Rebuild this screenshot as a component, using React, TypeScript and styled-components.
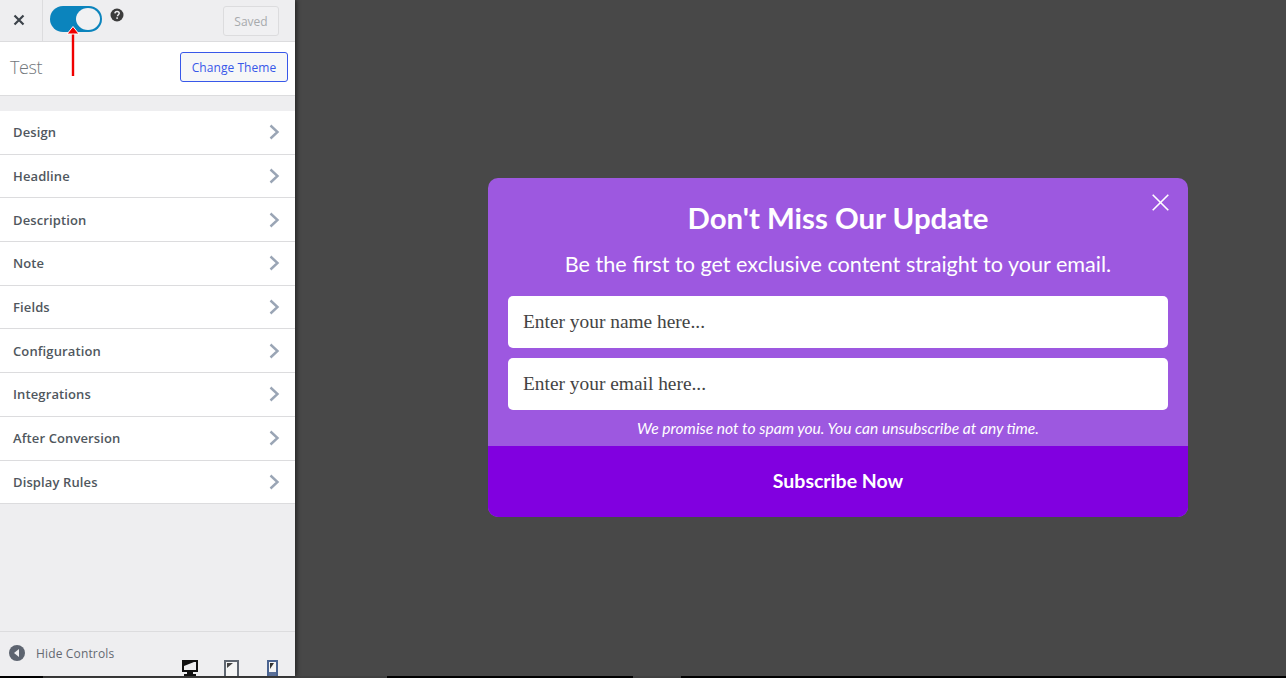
import { createGlobalStyle, styled } from "styled-components";

const GlobalStyle = createGlobalStyle`
  html, body {
    margin: 0;
    padding: 0;
    height: 100%;
    background: #000;
    overflow: hidden;
  }
  * { box-sizing: border-box; }
`;

const sections = [
  "Design",
  "Headline",
  "Description",
  "Note",
  "Fields",
  "Configuration",
  "Integrations",
  "After Conversion",
  "Display Rules",
];

const Shell = styled.div`
  width: 1286px;
  height: 678px;
  display: flex;
  flex-direction: column;
`;

const Main = styled.div`
  height: 676px;
  display: flex;
`;

const Sidebar = styled.aside`
  width: 295px;
  flex: none;
  display: flex;
  flex-direction: column;
  background: #eeeef0;
  box-shadow: 2px 0 4px rgba(0, 0, 0, 0.45);
  position: relative;
  font-family: "Open Sans", sans-serif;
`;

const TopBar = styled.div`
  height: 42px;
  flex: none;
  display: flex;
  border-bottom: 1px solid #dcdcde;
`;

const CloseTab = styled.div`
  width: 43px;
  height: 41px;
  flex: none;
  display: flex;
  align-items: center;
  justify-content: center;
  padding: 0 5px 2px 0;
  border-right: 1px solid #dcdcde;
  color: #3c434a;
`;

const ToggleArea = styled.div`
  position: relative;
  flex: 1;
  display: flex;
  align-items: flex-start;
  padding: 6px 16px 0 7px;
`;

const Toggle = styled.div`
  width: 52px;
  height: 26px;
  border-radius: 13px;
  background: #0b84bd;
  display: flex;
  justify-content: flex-end;
  align-items: center;
  padding-right: 2px;
`;

const Knob = styled.div`
  width: 24px;
  height: 22px;
  border-radius: 50%;
  background: #f1f1f3;
`;

const Help = styled.svg`
  width: 14px;
  height: 14px;
  margin: 2px 0 0 8px;
  flex: none;
`;

const SavedButton = styled.button`
  margin: 0 0 0 auto;
  width: 56px;
  height: 30px;
  padding: 0;
  border: 1px solid #dcdcde;
  border-radius: 3px;
  background: #f0f0f2;
  color: #a7aaad;
  font-family: inherit;
  font-size: 12px;
`;

const Arrow = styled.svg`
  position: absolute;
  left: 22px;
  top: 25px;
  width: 16px;
  height: 52px;
`;

const ThemeRow = styled.div`
  height: 54px;
  flex: none;
  display: flex;
  align-items: flex-start;
  justify-content: space-between;
  padding: 10px 7px 0 10px;
  background: #fff;
  border-bottom: 1px solid #dcdcde;
`;

const ThemeName = styled.span`
  font-size: 18px;
  line-height: 30px;
  font-weight: 300;
  color: #72777c;
  letter-spacing: -0.4px;
`;

const ThemeButton = styled.button`
  width: 108px;
  height: 30px;
  padding: 0;
  border: 1px solid #3858e9;
  border-radius: 3px;
  background: #f6f7f7;
  color: #3858e9;
  font-family: inherit;
  font-size: 12px;
  letter-spacing: 0.05px;
`;

const SectionList = styled.ul`
  list-style: none;
  margin: 15px 0 0;
  padding: 0;
  background: #fff;
`;

const SectionRow = styled.li`
  height: 43.69px;
  display: flex;
  align-items: center;
  justify-content: space-between;
  padding: 0 15px 0 13px;
  border-bottom: 1px solid #dcdcde;
  color: #50575e;
  font-size: 13px;
  font-weight: 600;
  letter-spacing: 0.12px;
`;

const Chevron = styled.svg`
  width: 12px;
  height: 16px;
  flex: none;
`;

const Footer = styled.div`
  margin-top: auto;
  height: 45px;
  flex: none;
  position: relative;
  overflow: hidden;
  display: flex;
  padding: 12px 0 0 9px;
  border-top: 1px solid #dcdcde;
  color: #646970;
  font-size: 12px;
  letter-spacing: 0.15px;
`;

const HideControls = styled.div`
  display: flex;
  align-items: center;
  gap: 11px;
  height: 18px;
`;

const Devices = styled.div`
  position: absolute;
  left: 182px;
  top: 28px;
  display: flex;
  gap: 26px;
`;

const DeviceIcon = styled.svg<{ $shift?: number }>`
  height: 18px;
  flex: none;
  display: block;
  margin-left: ${(p) => p.$shift ?? 0}px;
`;

const Stage = styled.main`
  flex: 1;
  background: #484848;
  display: flex;
  justify-content: flex-end;
  align-items: flex-start;
  padding: 178px 98px 0 0;
`;

const Popup = styled.section`
  position: relative;
  width: 700px;
  height: 339px;
  display: flex;
  flex-direction: column;
  border-radius: 10px;
  overflow: hidden;
  background: #9d58e0;
  color: #fff;
  font-family: Lato, sans-serif;
`;

const PopupBody = styled.div`
  flex: 1;
  display: flex;
  flex-direction: column;
  align-items: center;
  padding: 22px 20px 0;
`;

const Headline = styled.h2`
  margin: 0;
  height: 36px;
  font-size: 29.4px;
  line-height: 36px;
  font-weight: 700;
`;

const Description = styled.p`
  margin: 14px 0 0;
  height: 28px;
  font-size: 21.6px;
  line-height: 28px;
  font-weight: 400;
`;

const PopupClose = styled.svg`
  position: absolute;
  right: 19px;
  top: 16px;
  width: 17px;
  height: 17px;
`;

const Field = styled.div`
  width: 660px;
  height: 52px;
  flex: none;
  margin-top: 10px;
  display: flex;
  align-items: center;
  padding: 0 15px;
  border-radius: 5px;
  background: #fff;
  color: #444;
  font-family: "Liberation Serif", serif;
  font-size: 19.4px;

  &:first-of-type {
    margin-top: 18px;
  }
`;

const Note = styled.p`
  margin: 9px 0 0;
  font-size: 15.6px;
  line-height: 18px;
  font-style: italic;
`;

const Subscribe = styled.button`
  width: 100%;
  height: 71px;
  flex: none;
  border: 0;
  padding: 0 0 2px;
  background: #8100e0;
  color: #fff;
  font-family: Lato, sans-serif;
  font-size: 19.5px;
  font-weight: 700;
`;

const BottomStrip = styled.div`
  height: 2px;
  flex: none;
  display: flex;
  background: #000;
`;

const StripPart = styled.div<{ $w: number; $gray?: boolean }>`
  width: ${(p) => p.$w}px;
  flex: none;
  background: ${(p) => (p.$gray ? "#404040" : "#000")};
`;

const App = () => {
  return (
    <Shell>
      <GlobalStyle />
      <Main>
        <Sidebar>
          <TopBar>
            <CloseTab>
              <svg width="12" height="12" viewBox="0 0 12 12">
                <path d="M1.5 1.5l9 9M10.5 1.5l-9 9" stroke="currentColor" strokeWidth="2.2" />
              </svg>
            </CloseTab>
            <ToggleArea>
              <Toggle>
                <Knob />
              </Toggle>
              <Help viewBox="0 0 14 14">
                <circle cx="7" cy="7" r="6.5" fill="#3c3c3c" />
                <path
                  d="M4.9 5.4c.1-1.3 1-2 2.2-2 1.2 0 2.1.7 2.1 1.8 0 1.6-1.7 1.5-1.7 3"
                  fill="none"
                  stroke="#eeeef0"
                  strokeWidth="1.5"
                />
                <rect x="6.3" y="9.3" width="1.6" height="1.6" fill="#eeeef0" />
              </Help>
              <SavedButton>Saved</SavedButton>
              <Arrow viewBox="0 0 16 52">
                <path d="M8 7v44" stroke="#f00000" strokeWidth="2.4" />
                <path d="M8 1.5l6 7.5H2z" fill="#f00000" stroke="#fff" strokeWidth="1" />
              </Arrow>
            </ToggleArea>
          </TopBar>
          <ThemeRow>
            <ThemeName>Test</ThemeName>
            <ThemeButton>Change Theme</ThemeButton>
          </ThemeRow>
          <SectionList>
            {sections.map((name) => (
              <SectionRow key={name}>
                {name}
                <Chevron viewBox="0 0 12 16">
                  <path d="M2.5 1.5l7 6.5-7 6.5" fill="none" stroke="#9aa5b5" strokeWidth="2.4" />
                </Chevron>
              </SectionRow>
            ))}
          </SectionList>
          <Footer>
            <HideControls>
              <svg width="16" height="16" viewBox="0 0 16 16">
                <circle cx="8" cy="8" r="8" fill="#5d6470" />
                <path d="M10 4v8L5 8z" fill="#eeeef0" />
              </svg>
              Hide Controls
            </HideControls>
            <Devices>
              <DeviceIcon width="16" viewBox="0 0 16 18">
                <path d="M0 0h16v12h-5v2h3v2H2v-2h3v-2H0z" fill="#111" />
                <path d="M2 2h12v8H2z" fill="#eeeef0" />
                <path d="M2 2h10L2 6z" fill="#111" />
              </DeviceIcon>
              <DeviceIcon width="15" viewBox="0 0 15 18">
                <path d="M1 1h13v16H1z" fill="#f5f5f5" stroke="#5f6670" strokeWidth="2" />
                <path d="M3 3h6L3 8z" fill="#444" />
              </DeviceIcon>
              <DeviceIcon width="11" viewBox="0 0 11 18" $shift={2}>
                <path d="M1 1h9v16H1z" fill="#f5f5f5" stroke="#4a6390" strokeWidth="2" />
                <path d="M3 3h4L3 9z" fill="#333" />
                <path d="M2 12h7v4H2z" fill="#5a6f98" />
              </DeviceIcon>
            </Devices>
          </Footer>
        </Sidebar>
        <Stage>
          <Popup>
            <PopupClose viewBox="0 0 17 17">
              <path d="M.7.7l15.6 15.6M16.3.7.7 16.3" stroke="#fff" strokeWidth="1.6" />
            </PopupClose>
            <PopupBody>
              <Headline>Don't Miss Our Update</Headline>
              <Description>Be the first to get exclusive content straight to your email.</Description>
              <Field>Enter your name here...</Field>
              <Field>Enter your email here...</Field>
              <Note>We promise not to spam you. You can unsubscribe at any time.</Note>
            </PopupBody>
            <Subscribe>Subscribe Now</Subscribe>
          </Popup>
        </Stage>
      </Main>
      <BottomStrip>
        <StripPart $w={43} />
        <StripPart $w={344} $gray />
        <StripPart $w={246} />
        <StripPart $w={48} $gray />
      </BottomStrip>
    </Shell>
  );
};

export default App;
